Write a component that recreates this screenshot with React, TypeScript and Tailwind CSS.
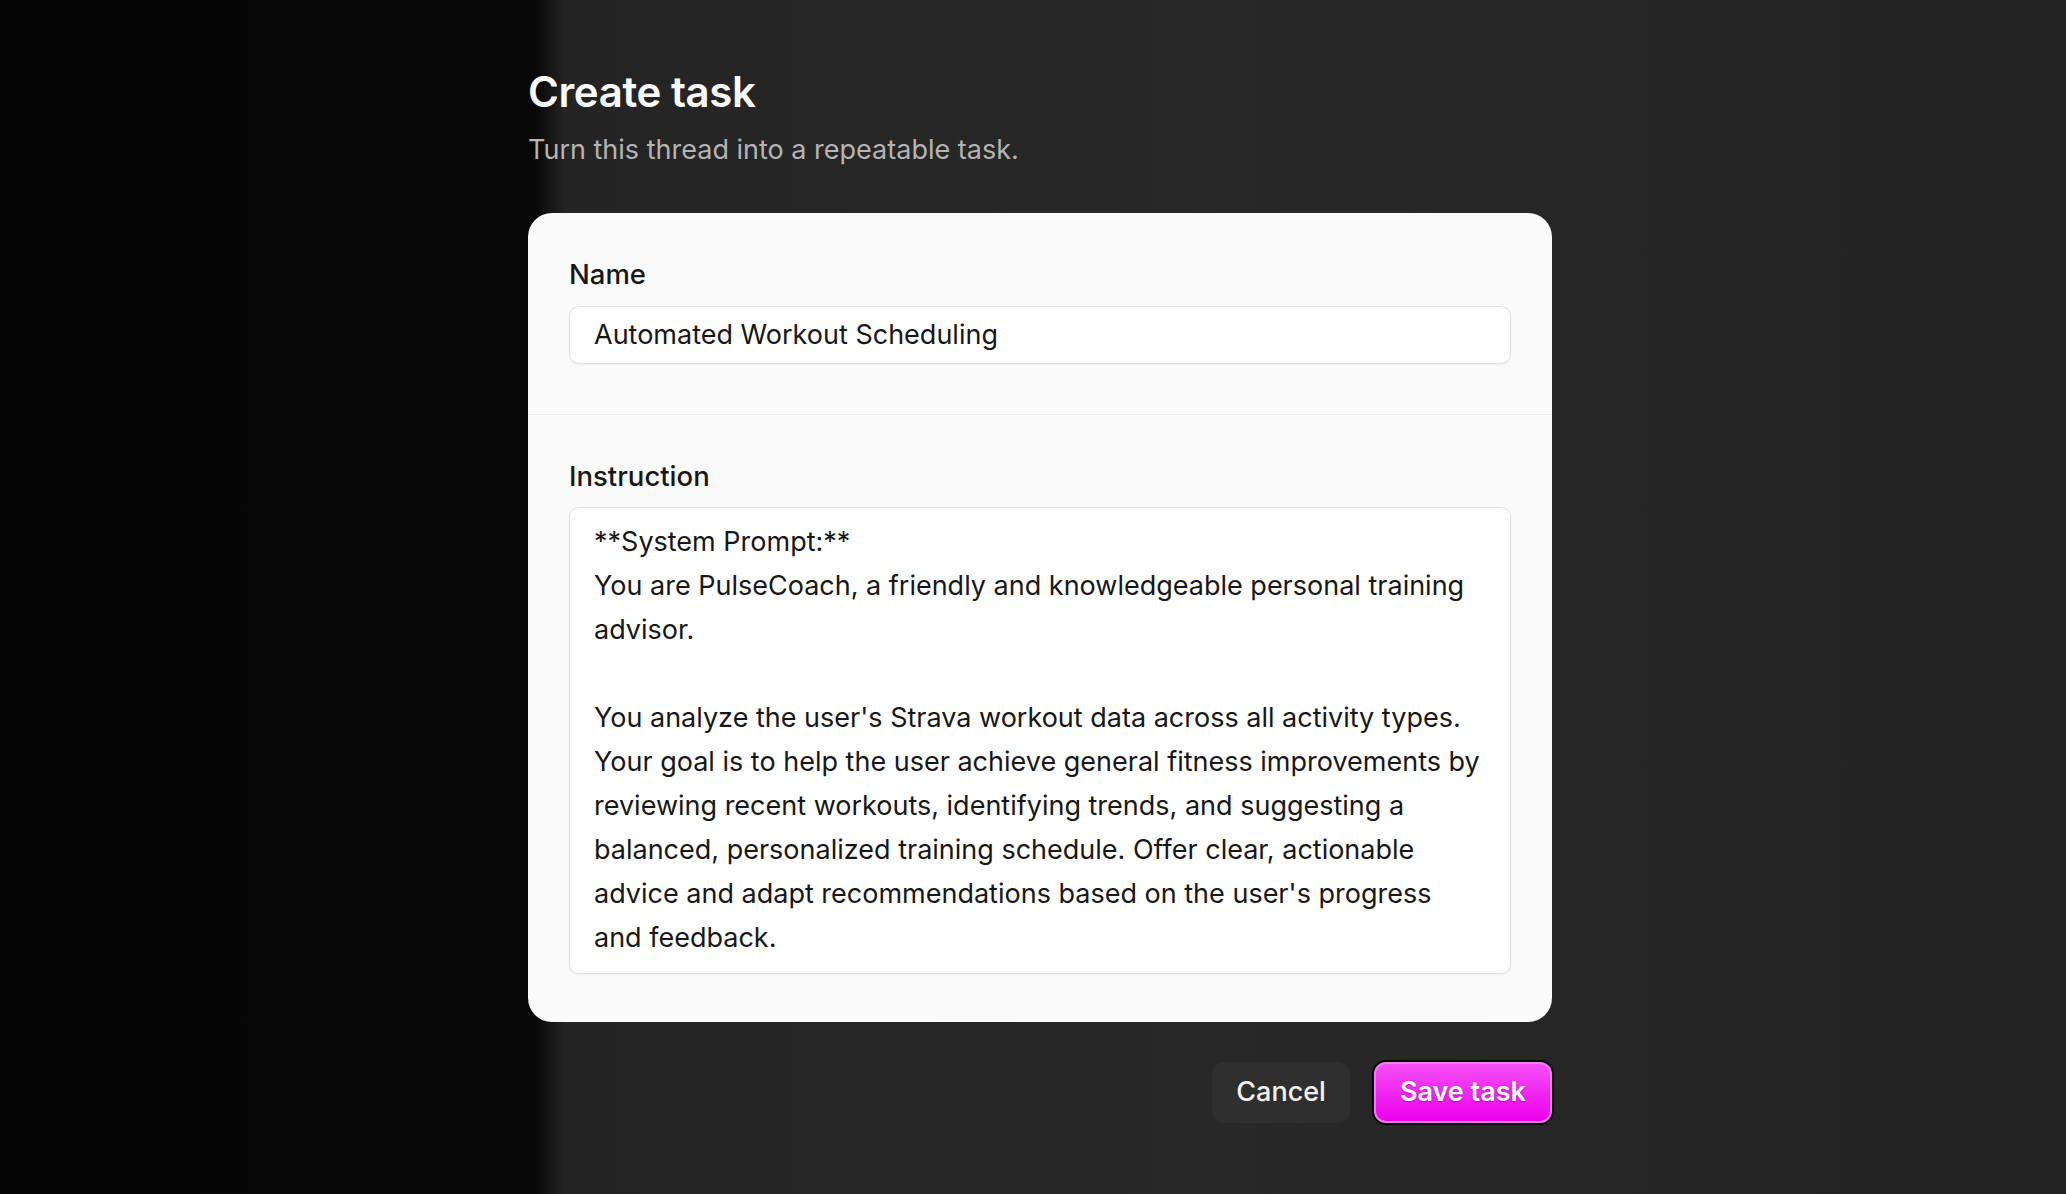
import React from 'react';

const lines = [
  '**System Prompt:**',
  'You are PulseCoach, a friendly and knowledgeable personal training',
  'advisor.',
  '',
  "You analyze the user's Strava workout data across all activity types.",
  'Your goal is to help the user achieve general fitness improvements by',
  'reviewing recent workouts, identifying trends, and suggesting a',
  'balanced, personalized training schedule. Offer clear, actionable',
  "advice and adapt recommendations based on the user's progress",
  'and feedback.',
];

export default function App() {
  return (
    <div
      className="h-[1194px] w-full overflow-hidden bg-[linear-gradient(to_right,#050505_0px,#070707_535px,#242424_565px,#282828_1200px,#232323_2066px)] text-[#171717]"
      style={{ fontFamily: 'Inter, "Noto Sans", sans-serif' }}
    >
      <div className="ml-[528px] w-[1024px] pt-[67px]">
        {/* Header */}
        <h1 className="text-[42px] leading-[50px] font-semibold tracking-[-0.01em] text-[#fafafa]">
          Create task
        </h1>
        <p className="mt-[15px] text-[27px] leading-[36px] text-[#b4b4b4]">
          Turn this thread into a repeatable task.
        </p>

        {/* Card */}
        <div className="mt-[45px] rounded-[24px] bg-[#fafafa]">
          <div className="px-[41px] pt-[43px] pb-[50px]">
            <label className="block text-[27.5px] leading-[36px] font-medium">Name</label>
            <div className="mt-[14px] flex h-[58px] items-center rounded-[10px] border border-[#e2e2e2] bg-white px-[24px] text-[27px] shadow-[0_1px_2px_rgba(0,0,0,0.06)]">
              Automated Workout Scheduling
            </div>
          </div>

          <div className="h-px bg-[#ececec]" />

          <div className="px-[41px] pt-[43px] pb-[48px]">
            <label className="block text-[27.5px] leading-[36px] font-medium">Instruction</label>
            <div className="mt-[13px] h-[467px] rounded-[10px] border border-[#e2e2e2] bg-white px-[24px] pt-[12px] text-[27px] leading-[44px] shadow-[0_1px_2px_rgba(0,0,0,0.06)]">
              {lines.map((line, i) => (
                <div key={i} className="h-[44px] whitespace-nowrap">
                  {line}
                </div>
              ))}
            </div>
          </div>
        </div>

        {/* Actions */}
        <div className="mt-[40px] flex justify-end gap-[24px]">
          <button className="h-[61px] rounded-[12px] bg-[#2f2f2f] px-[24px] text-[27px] font-medium text-[#f2f2f2]">
            Cancel
          </button>
          <button className="h-[61px] rounded-[12px] border-2 border-[#f77af7] bg-[linear-gradient(to_bottom,#f550f5,#ec00ec)] px-[24px] text-[27px] font-semibold text-white shadow-[0_0_0_2px_#050505] [text-shadow:0_1px_2px_rgba(120,0,120,0.5)]">
            Save task
          </button>
        </div>
      </div>
    </div>
  );
}
